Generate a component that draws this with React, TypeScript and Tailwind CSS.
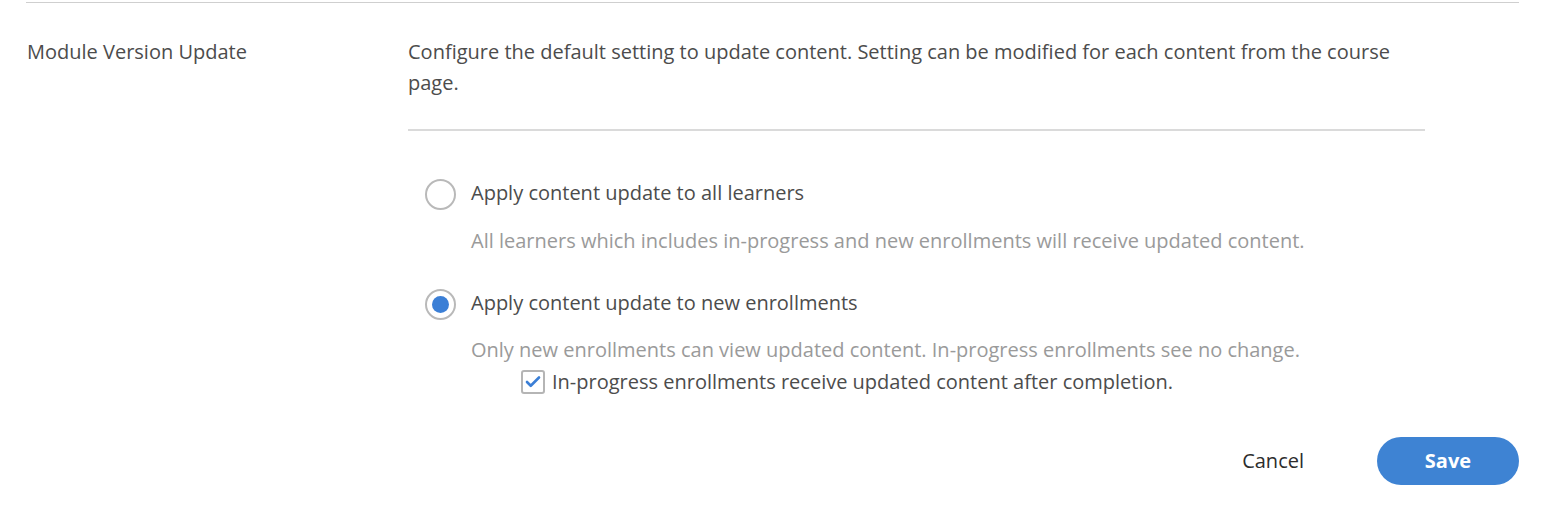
import { Check } from "lucide-react";

const font = { fontFamily: "'Open Sans', 'Noto Sans', sans-serif" };

const Radio = ({ checked }: { checked?: boolean }) => (
  <span className="flex h-[31px] w-[31px] shrink-0 items-center justify-center rounded-full border-2 border-[#b9b9b9] bg-white">
    {checked && <span className="h-[17px] w-[17px] rounded-full bg-[#3b7fd6]" />}
  </span>
);

const App = () => {
  return (
    <div className="w-[1566px] h-[515px] bg-white pl-[26px] pr-[47px] pt-[2px]" style={font}>
      <div className="border-t border-[#cfcfcf]" />
      <div className="flex pt-[33px]">
        <div className="w-[382px] shrink-0 pl-[1px] text-[20px] leading-[31px] text-[#4c4c4c]">
          Module Version Update
        </div>
        <div className="w-[1017px]">
          <p className="text-[20px] leading-[31px] text-[#4c4c4c]">
            Configure the default setting to update content. Setting can be modified for each content from the course page.
          </p>
          <div className="mt-[31px] border-t-2 border-[#dadada]" />

          <div className="mt-[48px] pl-[17px]">
            <label className="flex items-center gap-[15px]">
              <Radio />
              <span className="pb-[4px] text-[20px] leading-[27px] text-[#4c4c4c]">Apply content update to all learners</span>
            </label>
            <p className="mt-[15px] pl-[46px] text-[20px] leading-[31px] text-[#9a9a9a]">
              All learners which includes in-progress and new enrollments will receive updated content.
            </p>

            <label className="mt-[33px] flex items-center gap-[15px]">
              <Radio checked />
              <span className="pb-[4px] text-[20px] leading-[27px] text-[#4c4c4c]">Apply content update to new enrollments</span>
            </label>
            <p className="mt-[14px] pl-[46px] text-[20px] leading-[31px] text-[#9a9a9a]">
              Only new enrollments can view updated content. In-progress enrollments see no change.
            </p>
            <label className="mt-[1px] flex items-center gap-[7px] pl-[96px]">
              <span className="flex h-[24px] w-[24px] items-center justify-center rounded-[3px] border-2 border-[#b5b5b5] bg-white">
                <Check className="h-[18px] w-[18px] text-[#3b7fd6]" strokeWidth={3.5} />
              </span>
              <span className="text-[20px] leading-[31px] text-[#4c4c4c]">
                In-progress enrollments receive updated content after completion.
              </span>
            </label>
          </div>
        </div>
      </div>
      <div className="mt-[40px] flex items-center justify-end gap-[73px]">
        <button className="text-[20px] text-[#2c2c2c]">Cancel</button>
        <button className="h-[48px] w-[142px] rounded-full bg-[#3e83d3] text-[20px] font-bold text-white">
          Save
        </button>
      </div>
    </div>
  );
};

export default App;
